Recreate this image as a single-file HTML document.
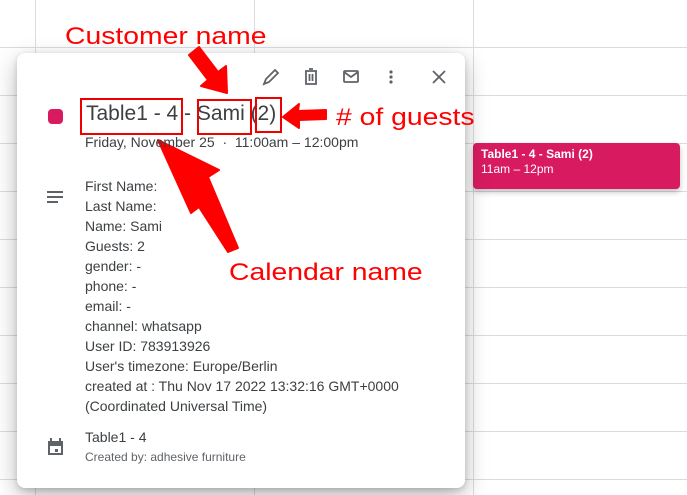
<!DOCTYPE html>
<html><head><meta charset="utf-8"><style>
*{margin:0;padding:0;box-sizing:border-box}
body{width:687px;height:495px;overflow:hidden;background:#fff;font-family:"Liberation Sans",sans-serif;position:relative}
.v{position:absolute;top:0;width:1px;height:495px;background:#dadce0}
.h{position:absolute;left:0;width:687px;height:1px;background:#dadce0}
.pop{position:absolute;left:17px;top:53px;width:448px;height:435px;background:#fff;border-radius:8px;box-shadow:0 8px 24px rgba(0,0,0,.28),0 2px 6px rgba(0,0,0,.15)}
.ev{position:absolute;left:473px;top:143px;width:207px;height:46px;background:#d81b60;border-radius:4px;color:#fff;font-size:12px;padding:4px 8px;line-height:15px;box-shadow:0 3px 6px rgba(0,0,0,.25)}
.t{position:absolute;color:#3c4043;white-space:nowrap}
.r{position:absolute;color:#f00;font-size:24px;white-space:nowrap;transform-origin:0 0;transform:scaleX(1.18)}
.bx{position:absolute;border:2px solid #e00}
</style></head><body>
<div class="v" style="left:35px"></div><div class="v" style="left:254px"></div><div class="v" style="left:473px"></div>
<div class="h" style="top:47px"></div><div class="h" style="top:95px"></div><div class="h" style="top:143px"></div><div class="h" style="top:191px"></div><div class="h" style="top:239px"></div><div class="h" style="top:287px"></div><div class="h" style="top:335px"></div><div class="h" style="top:383px"></div><div class="h" style="top:431px"></div><div class="h" style="top:479px"></div>
<div class="ev"><b>Table1 - 4 - Sami (2)</b><br>11am – 12pm</div>
<div class="pop"></div>
<svg style="position:absolute;left:0;top:0" width="687" height="495" fill="none" stroke="#5f6368" stroke-width="1.8">
<path d="M264 84l2-5 9-9 3 3-9 9z"/>
<path d="M305 71h12M309 69h4M306 71v13h10V71M309.5 74v7M312.5 74v7"/>
<rect x="344" y="71" width="14" height="11" rx="1"/><path d="M344 72l7 5 7-5"/>
<g fill="#5f6368" stroke="none"><circle cx="391" cy="72" r="1.6"/><circle cx="391" cy="77" r="1.6"/><circle cx="391" cy="82" r="1.6"/>
<rect x="48" y="109" width="15" height="15" rx="4" fill="#d81b60"/>
<rect x="47" y="191" width="16" height="2"/><rect x="47" y="196" width="16" height="2"/><rect x="47" y="201" width="11" height="2"/>
<path d="M48 441h15v14H48z M50 446v7h11v-7z" fill-rule="evenodd"/><rect x="50" y="438" width="2" height="4"/><rect x="59" y="438" width="2" height="4"/><rect x="55" y="449" width="3" height="3"/></g>
<path d="M433 71l12 12M445 71l-12 12"/>
<g fill="#f00" stroke="#f00" stroke-width="2" stroke-linejoin="round">
<polygon points="189,55 199,47 218,72 226,66 227,93 201,86 208,80"/>
<polygon points="326,110 326,119 299,120 299,128 283,117 299,104 298,111"/>
<polygon points="238,248 228,252 199,207 191,213 158,140 219,170 208,177"/>
</g></svg>
<div class="t" style="left:86px;top:102px;font-size:21px">Table1 - 4 - Sami (2)</div>
<div class="bx" style="left:80px;top:98px;width:103px;height:37px"></div>
<div class="bx" style="left:197px;top:99px;width:55px;height:36px"></div>
<div class="bx" style="left:255px;top:97px;width:27px;height:36px"></div>
<div class="t" style="left:85px;top:134px;font-size:14px">Friday, November 25 &nbsp;·&nbsp; 11:00am – 12:00pm</div>
<div class="t" style="left:85px;top:176px;font-size:14px;line-height:20px">First Name:<br>Last Name:<br>Name: Sami<br>Guests: 2<br>gender: -<br>phone: -<br>email: -<br>channel: whatsapp<br>User ID: 783913926<br>User's timezone: Europe/Berlin<br>created at : Thu Nov 17 2022 13:32:16 GMT+0000<br>(Coordinated Universal Time)</div>
<div class="t" style="left:85px;top:429px;font-size:14px">Table1 - 4</div>
<div class="t" style="left:85px;top:450px;font-size:12px;color:#5f6368">Created by: adhesive furniture</div>
<div class="r" style="left:65px;top:23px">Customer name</div>
<div class="r" style="left:336px;top:104px">#&nbsp;of guests</div>
<div class="r" style="left:229px;top:259px">Calendar name</div>
</body></html>
